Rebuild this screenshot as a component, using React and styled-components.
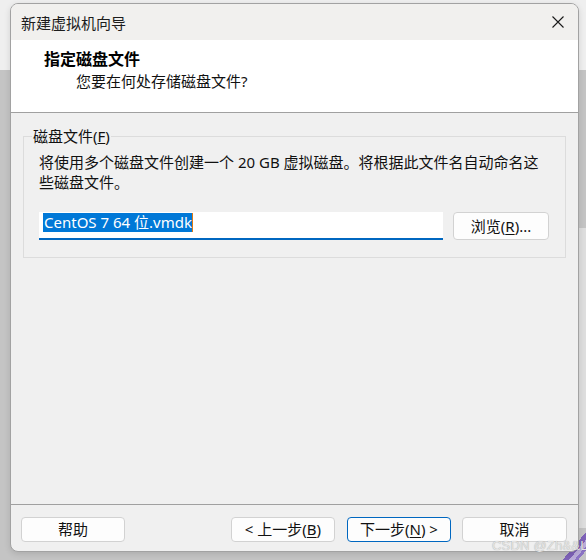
import React from 'react';
import styled, { createGlobalStyle } from 'styled-components';

const Global = createGlobalStyle`
  html, body { margin: 0; padding: 0; }
  body {
    width: 586px;
    height: 560px;
    overflow: hidden;
    font-family: "Noto Sans", "Noto Sans CJK SC", sans-serif;
    color: #1a1a1a;
  }
`;

const Desktop = styled.div`
  position: relative;
  width: 586px;
  height: 560px;
  box-sizing: border-box;
  padding: 3px 0 0 10px;
  background:
    linear-gradient(-50deg, transparent 0 6px, #8b74c4 6px 9px, #b9acd9 9px 13px, #7e62b8 13px 18px, transparent 18px) right 0 bottom 0 / 34px 36px no-repeat,
    linear-gradient(#dedede, #dedede) right 0 top 228px / 10px 300px no-repeat,
    linear-gradient(#efefef, #efefef) left top / 100% 70px no-repeat,
    #c4c4c4;
`;

const Window = styled.div`
  width: 569px;
  height: 549px;
  box-sizing: border-box;
  display: flex;
  flex-direction: column;
  border: 1px solid #a2a2a2;
  border-radius: 8px;
  overflow: hidden;
  background: #f0f0f0;
  box-shadow: 0 2px 6px rgba(0, 0, 0, 0.12);
`;

const TitleBar = styled.div`
  height: 36px;
  flex: none;
  display: flex;
  align-items: center;
  justify-content: space-between;
  padding: 0 14px 0 10px;
  background: #f1f0ee;
  font-size: 15px;
  color: #1c1c1c;
`;

const CloseButton = styled.span`
  display: flex;
  width: 12px;
  height: 12px;
`;

const Header = styled.div`
  flex: none;
  box-sizing: border-box;
  height: 73px;
  background: #ffffff;
  border-bottom: 1px solid #a0a0a0;
  padding: 9px 0 0 33px;
`;

const HeaderTitle = styled.div`
  font-size: 16px;
  font-weight: 700;
  line-height: 20px;
  color: #000;
`;

const HeaderSub = styled.div`
  font-size: 15px;
  line-height: 20px;
  margin: 2px 0 0 32px;
  color: #111;
`;

const Body = styled.div`
  flex: 1;
  padding: 14px 12px 0 12px;
`;

const Group = styled.fieldset`
  margin: 0;
  min-width: 0;
  border: 1px solid #dcdcdc;
  padding: 6px 16px 17px 15px;
  font-size: 15px;
`;

const Legend = styled.legend`
  padding: 0 1px;
  margin-left: -7px;
  line-height: 19px;
  font-size: 15px;
  color: #111;
`;

const Desc = styled.div`
  line-height: 20px;
  white-space: nowrap;
  color: #111;
`;

const FileRow = styled.div`
  display: flex;
  align-items: stretch;
  gap: 10px;
  margin-top: 20px;
`;

const TextBox = styled.div`
  flex: 1;
  height: 28px;
  box-sizing: border-box;
  background: #fff;
  border-bottom: 2px solid #0067c0;
  padding: 1px 0 0 4px;
  display: flex;
  align-items: flex-start;
`;

const Selected = styled.span`
  background: #0078d7;
  color: #fff;
  font-size: 15px;
  line-height: 19px;
  padding: 0 0 0 1px;
  white-space: nowrap;
`;

const Caret = styled.span`
  width: 1px;
  height: 19px;
  background: #e07a10;
`;

const Button = styled.button`
  width: ${(p) => p.$w || 104}px;
  height: ${(p) => p.$h || 25}px;
  box-sizing: border-box;
  border: 1px solid ${(p) => (p.$primary ? '#0067c0' : '#d2d2d2')};
  border-radius: 4px;
  background: #fdfdfd;
  font-family: "Noto Sans", "Noto Sans CJK SC", sans-serif;
  font-size: 15px;
  color: #111;
  padding: 0;
  display: flex;
  align-items: center;
  justify-content: center;
  white-space: pre;
  line-height: 1;
  u { text-underline-offset: 2px; }
`;

const Footer = styled.div`
  flex: none;
  height: 47px;
  box-sizing: border-box;
  border-top: 1px solid #a0a0a0;
  padding: 12px 11px 0 10px;
  display: flex;
  justify-content: space-between;
  align-items: flex-start;
`;

const NavGroup = styled.div`
  display: flex;
  gap: 12px;
  & > :last-child { margin-left: -1px; width: 105px; }
`;

const Watermark = styled.div`
  position: absolute;
  left: 492px;
  top: 539px;
  white-space: nowrap;
  font-family: "Liberation Sans", "Noto Sans", sans-serif;
  font-size: 13px;
  line-height: 14px;
  letter-spacing: 0.2px;
  color: #e4e4e4;
  text-shadow: 0 0 1px rgba(0, 0, 0, 0.35);
`;

export default function App() {
  return (
    <>
      <Global />
      <Desktop>
        <Window>
          <TitleBar>
            <span>新建虚拟机向导</span>
            <CloseButton>
              <svg width="12" height="12" viewBox="0 0 12 12">
                <path d="M0.5 0.5 L11.5 11.5 M11.5 0.5 L0.5 11.5" stroke="#1a1a1a" strokeWidth="1.1" fill="none" />
              </svg>
            </CloseButton>
          </TitleBar>
          <Header>
            <HeaderTitle>指定磁盘文件</HeaderTitle>
            <HeaderSub>您要在何处存储磁盘文件?</HeaderSub>
          </Header>
          <Body>
            <Group>
              <Legend>
                磁盘文件(<u>F</u>)
              </Legend>
              <Desc>将使用多个磁盘文件创建一个 20 GB 虚拟磁盘。将根据此文件名自动命名这</Desc>
              <Desc>些磁盘文件。</Desc>
              <FileRow>
                <TextBox>
                  <Selected>CentOS 7 64 位.vmdk</Selected>
                  <Caret />
                </TextBox>
                <Button $w={96} $h={28}>
                  浏览(<u>R</u>)...
                </Button>
              </FileRow>
            </Group>
          </Body>
          <Footer>
            <Button>帮助</Button>
            <NavGroup>
              <Button>
                {'< 上一步('}<u>B</u>)
              </Button>
              <Button $primary>
                下一步(<u>N</u>){' >'}
              </Button>
              <Button>取消</Button>
            </NavGroup>
          </Footer>
        </Window>
        <Watermark>CSDN @Zh&amp;&amp;Li</Watermark>
      </Desktop>
    </>
  );
}
